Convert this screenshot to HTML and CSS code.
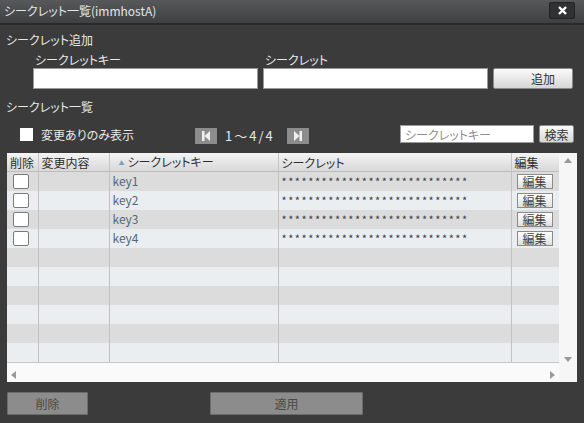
FILE: index.html
```html
<!DOCTYPE html>
<html lang="ja">
<head>
<meta charset="utf-8">
<title>シークレット一覧</title>
<link rel="stylesheet" href="styles.css">
</head>
<body>
<div class="window">
  <div class="titlebar">
    <span class="title">シークレット一覧(immhostA)</span>
    <button class="close" aria-label="閉じる">
      <svg width="9" height="9" viewBox="0 0 10 10"><path d="M2 2L8 8M8 2L2 8" stroke="#ffffff" stroke-width="2.6" stroke-linecap="square"/></svg>
    </button>
  </div>
  <div class="content">
    <div class="section-title first">シークレット追加</div>
    <div class="add-form">
      <div class="field">
        <div class="field-label">シークレットキー</div>
        <input class="text-input" type="text">
      </div>
      <div class="field">
        <div class="field-label">シークレット</div>
        <input class="text-input" type="text">
      </div>
      <button class="btn btn-add">追加</button>
    </div>
    <div class="section-title">シークレット一覧</div>
    <div class="toolbar">
      <div class="filter"><span class="checkbox-sq"></span><span>変更ありのみ表示</span></div>
      <div class="pager">
        <span class="pager-btn"><svg width="8" height="10" viewBox="0 0 8 10"><rect x="0" y="0" width="2.5" height="10" fill="#f0f0f0"/><path d="M8 0L2.5 5L8 10Z" fill="#f0f0f0"/></svg></span>
        <span class="pager-text">1〜4/4</span>
        <span class="pager-btn"><svg width="8" height="10" viewBox="0 0 8 10"><path d="M0 0L5.5 5L0 10Z" fill="#f0f0f0"/><rect x="5.5" y="0" width="2.5" height="10" fill="#f0f0f0"/></svg></span>
      </div>
      <div class="search">
        <input class="search-input" type="text" placeholder="シークレットキー">
        <button class="btn btn-search">検索</button>
      </div>
    </div>
    <div class="grid">
      <div class="grid-main">
        <table class="tbl">
          <colgroup><col class="c1"><col class="c2"><col class="c3"><col class="c4"><col class="c5"></colgroup>
          <thead>
            <tr><th>削除</th><th>変更内容</th><th class="sorted"><span class="sort-arrow">▲</span>シークレットキー</th><th>シークレット</th><th>編集</th></tr>
          </thead>
          <tbody>
            <tr class="odd"><td><span class="row-cb"></span></td><td></td><td class="key">key1</td><td class="secret">****************************</td><td><span class="edit-btn">編集</span></td></tr>
            <tr class="even"><td><span class="row-cb"></span></td><td></td><td class="key">key2</td><td class="secret">****************************</td><td><span class="edit-btn">編集</span></td></tr>
            <tr class="odd"><td><span class="row-cb"></span></td><td></td><td class="key">key3</td><td class="secret">****************************</td><td><span class="edit-btn">編集</span></td></tr>
            <tr class="even"><td><span class="row-cb"></span></td><td></td><td class="key">key4</td><td class="secret">****************************</td><td><span class="edit-btn">編集</span></td></tr>
            <tr class="odd"><td></td><td></td><td></td><td></td><td></td></tr>
            <tr class="even"><td></td><td></td><td></td><td></td><td></td></tr>
            <tr class="odd"><td></td><td></td><td></td><td></td><td></td></tr>
            <tr class="even"><td></td><td></td><td></td><td></td><td></td></tr>
            <tr class="odd"><td></td><td></td><td></td><td></td><td></td></tr>
            <tr class="even last"><td></td><td></td><td></td><td></td><td></td></tr>
          </tbody>
        </table>
        <div class="hscroll">
          <svg width="5" height="8" viewBox="0 0 5 8"><path d="M5 0L0 4L5 8Z" fill="#9a9a9a"/></svg>
          <svg width="5" height="8" viewBox="0 0 5 8"><path d="M0 0L5 4L0 8Z" fill="#9a9a9a"/></svg>
        </div>
      </div>
      <div class="vscroll">
        <svg width="8" height="5" viewBox="0 0 8 5"><path d="M0 5L4 0L8 5Z" fill="#9a9a9a"/></svg>
        <svg width="8" height="5" viewBox="0 0 8 5"><path d="M0 0L4 5L8 0Z" fill="#9a9a9a"/></svg>
      </div>
    </div>
    <div class="footer">
      <button class="btn-gray btn-delete">削除</button>
      <button class="btn-gray btn-apply">適用</button>
    </div>
  </div>
</div>
</body>
</html>
```
FILE: styles.css
```css
* { box-sizing: border-box; }
html, body { margin: 0; padding: 0; }
body {
  width: 584px;
  height: 423px;
  overflow: hidden;
  background: #3b3b3b;
  font-family: "Noto Sans CJK JP", "Noto Sans", sans-serif;
  font-size: 12px;
  color: #e8e8e8;
  font-feature-settings: "palt" 1;
}
button, input { font-family: inherit; font-size: 12px; font-feature-settings: "palt" 1; }

.window { width: 584px; height: 423px; }

.titlebar {
  height: 25px;
  display: flex;
  align-items: center;
  justify-content: space-between;
  padding: 0 9px 2px 4px;
  background: linear-gradient(#56585a, #3e4042);
  border-bottom: 2px solid #2a2a2a;
}
.title { color: #e4e6e8; font-size: 12px; line-height: 16px; }
.close {
  width: 26px; height: 17px;
  padding: 0;
  display: flex; align-items: center; justify-content: center;
  background: #2f3133;
  border: 1px solid #222;
  border-radius: 2px;
}

.content { padding: 0 7px 0 6px; }

.section-title { height: 16px; line-height: 16px; margin-top: 10px; }
.section-title.first { margin-top: 7px; }

.add-form {
  display: flex;
  align-items: flex-end;
  padding-left: 27px;
  margin-top: 4px;
}
.field { display: flex; flex-direction: column; width: 225px; margin-right: 5px; }
.field-label { height: 16px; line-height: 16px; padding-left: 2px; }
.text-input {
  height: 21px;
  width: 225px;
  border: 1px solid #9a9a9a;
  background: #fff;
  margin: 0;
}
.btn {
  border: 1px solid #8c8c8c;
  background: linear-gradient(#fbfbfb, #d6d6d6);
  color: #333;
  border-radius: 2px;
  padding: 0;
}
.btn-add { width: 80px; height: 21px; padding-left: 20px; }

.toolbar {
  display: flex;
  align-items: center;
  height: 22px;
  margin-top: 8px;
}
.filter { display: flex; align-items: center; width: 189px; padding-left: 14px; }
.checkbox-sq { width: 13px; height: 13px; background: #fff; margin-right: 8px; }
.pager { display: flex; align-items: center; margin-top: 3px; }
.pager-btn {
  width: 22px; height: 16px;
  background: #8c8c8c;
  display: flex; align-items: center; justify-content: center;
}
.pager-text { width: 70px; padding-left: 8px; font-size: 13px; color: #e8e8e8; letter-spacing: 2px; }
.search { display: flex; align-items: center; margin-left: 91px; }
.search-input {
  width: 134px; height: 18px;
  border: 1px solid #9a9a9a;
  background: #fff;
  margin: 0 5px 0 0;
  padding: 0 4px;
  font-size: 12px;
}
.search-input::placeholder { color: #8e8e8e; }
.btn-search { width: 35px; height: 18px; }

.grid {
  display: flex;
  width: 570px;
  height: 229px;
  margin-top: 8px;
  margin-left: 1px;
  background: #fafafa;
}
.grid-main { width: 552px; display: flex; flex-direction: column; }
.tbl {
  width: 552px;
  border-collapse: collapse;
  table-layout: fixed;
  color: #333;
}
.c1 { width: 31px; } .c2 { width: 71px; } .c3 { width: 169px; } .c4 { width: 233px; } .c5 { width: 48px; }
.tbl th {
  height: 18px;
  padding: 0 0 0 3px;
  text-align: left;
  font-weight: normal;
  color: #2e2e2e;
  background: linear-gradient(#f4f4f4, #d8d8d8);
  border-right: 1px solid #c4c4c4;
  border-bottom: 1px solid #bdbdbd;
  line-height: 17px;
}
.tbl th:last-child { border-right: none; }
.sort-arrow { font-size: 6px; color: #7e9fc4; vertical-align: 2px; margin: 0 3px 0 6px; }
.tbl td {
  height: 19px;
  padding: 0;
  border-right: 1px solid #c2c2c2;
  line-height: 18px;
}
.tbl td:last-child { border-right: none; }
.tbl tr.odd td { background: #dcdcdc; }
.tbl tr.even td { background: #ebeef1; }
.tbl tr.last td { border-bottom: 1px solid #c8c8c8; height: 20px; }
.row-cb {
  display: block;
  width: 16px; height: 15px;
  margin-left: 6px;
  background: #fff;
  border: 1px solid #7a7a7a;
  border-radius: 2px;
}
.key { padding-left: 3px !important; color: #55687a; }
.secret { padding-left: 3px !important; color: #3a3f48; font-size: 11px; letter-spacing: 1.55px; white-space: nowrap; overflow: hidden; }
.edit-btn {
  display: block;
  width: 36px; height: 15px;
  margin-left: 5px;
  border: 1px solid #8a8a8a;
  background: linear-gradient(#ffffff, #e0e0e0);
  color: #444;
  text-align: center;
  line-height: 13px;
  font-size: 12px;
}
.hscroll {
  margin-top: auto;
  height: 15px;
  display: flex;
  align-items: center;
  justify-content: space-between;
  padding: 0 4px 0 4px;
}
.vscroll {
  width: 18px;
  display: flex;
  flex-direction: column;
  align-items: center;
  justify-content: space-between;
  padding: 5px 0 20px 0;
  background: #f6f6f6;
}

.footer { display: flex; margin-top: 10px; padding-left: 1px; }
.btn-gray {
  height: 23px;
  background: #8c8c8c;
  border: 1px solid #6c6c6c;
  color: #4a4a4a;
  padding: 0;
  border-radius: 1px;
}
.btn-delete { width: 81px; }
.btn-apply { width: 153px; margin-left: 122px; }
```
